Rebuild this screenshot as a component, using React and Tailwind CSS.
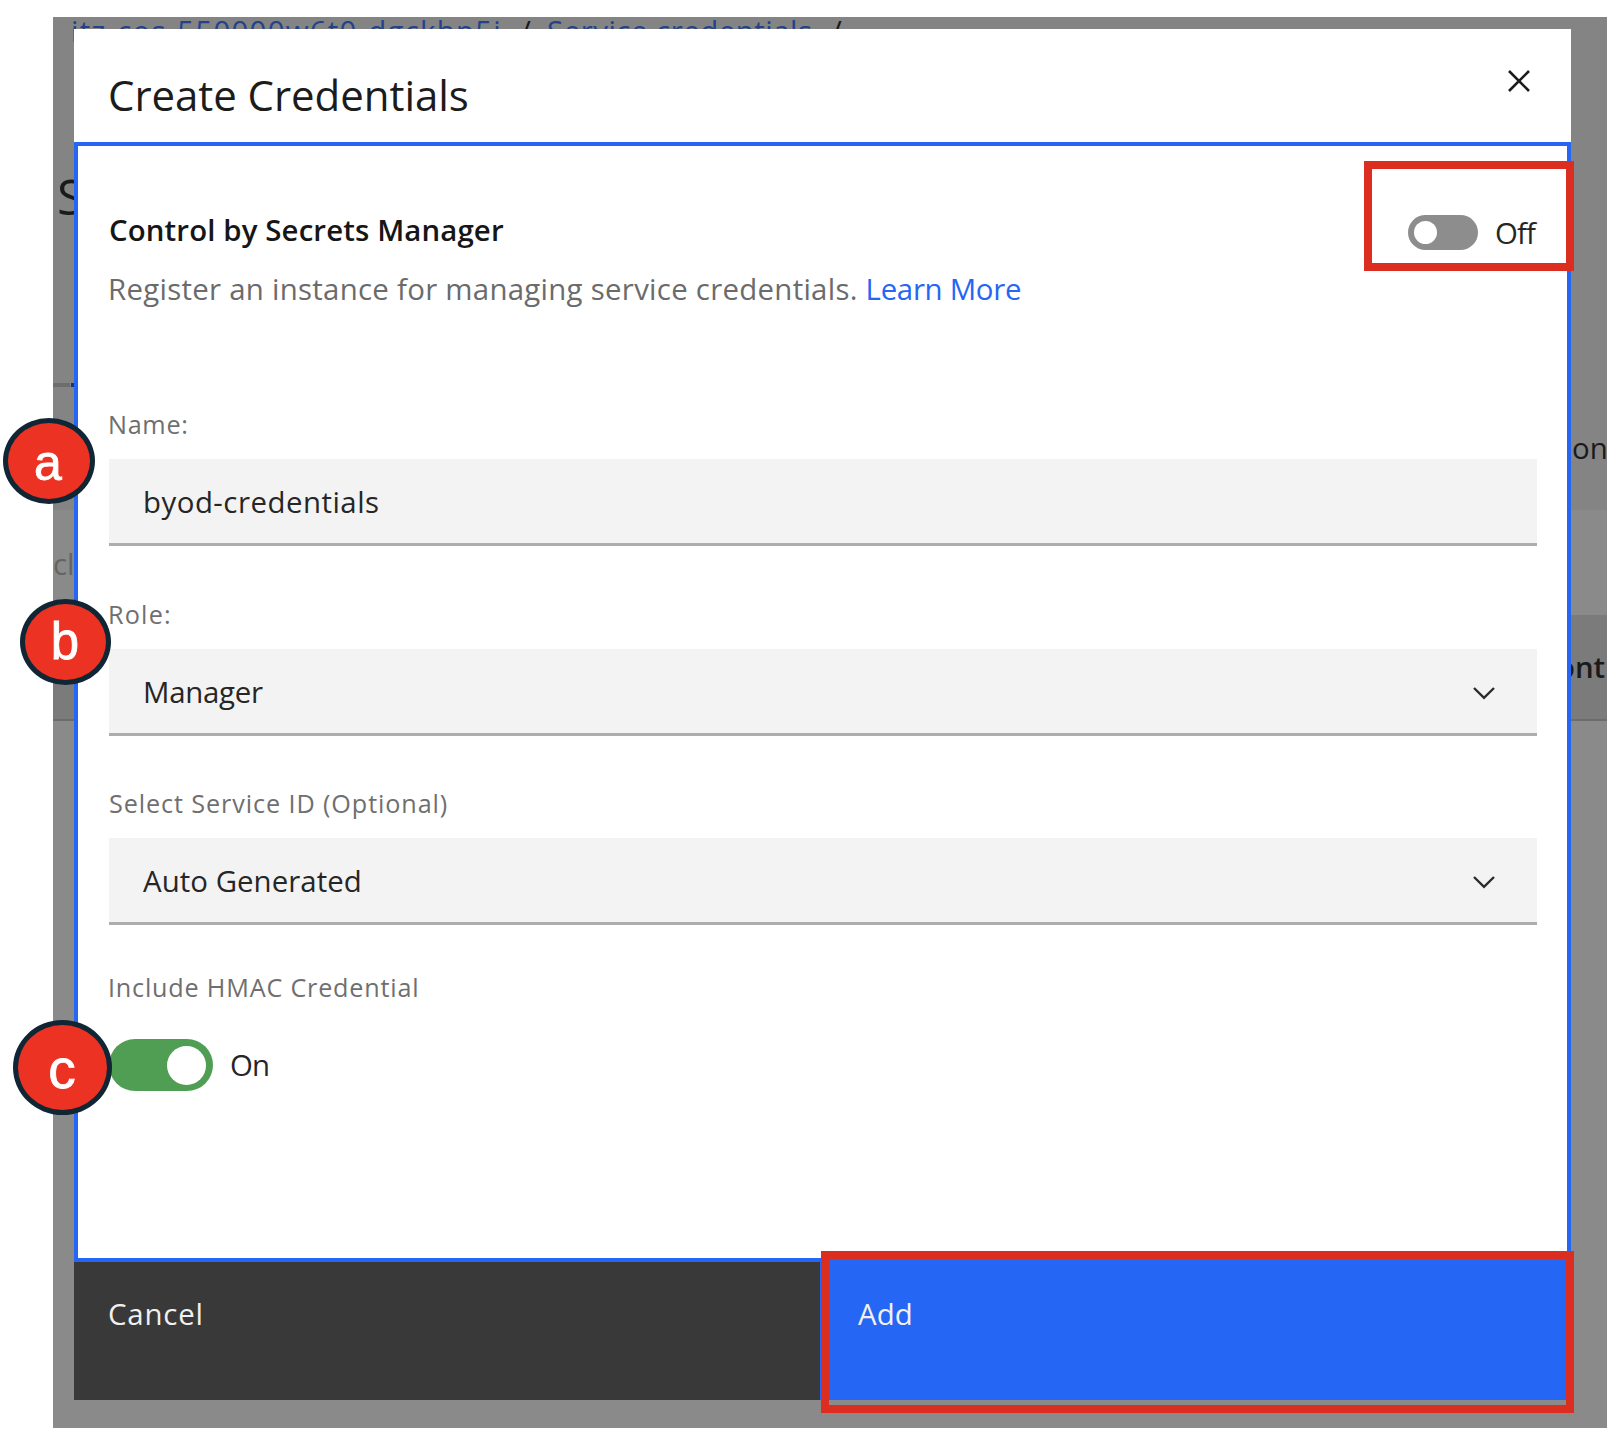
import React from 'react';

function Chevron() {
  return (
    <svg className="mr-[41px] mt-[2px] block h-[14px] w-[24px]" viewBox="0 0 24 14" fill="none" stroke="#2b2b2b" strokeWidth="2.4">
      <path d="M2 2 L12 11.8 L22 2" />
    </svg>
  );
}

function Close() {
  return (
    <svg className="mr-[40px] mt-[40px] block h-[24px] w-[24px]" viewBox="0 0 24 24" fill="none" stroke="#1c1c1c" strokeWidth="2.6">
      <path d="M2 2 L22 22 M22 2 L2 22" />
    </svg>
  );
}

function Field({ children, chevron }) {
  return (
    <div className="mt-[19px] flex h-[87px] items-center justify-between border-b-[3px] border-[#adadad] bg-[#f3f3f3] pl-[34px] pt-[2px] text-[29.4px] leading-[40px] text-[#262626]">
      {children}
      {chevron && <Chevron />}
    </div>
  );
}

function Backdrop() {
  return (
    <div className="flex h-full flex-col overflow-hidden bg-[#8a8a8a] whitespace-nowrap text-[#1a1a1a]">
      <div className="h-[493px] shrink-0 bg-[#848484]">
        <div className="flex h-[40px] pl-[18px] text-[29.4px] leading-[28px]">
          <span className="w-[449px] tracking-[1.25px] text-[#23428c]">itz-cos-550000w6t0-dgckhp5j</span>
          <span className="w-[27px]">/</span>
          <span className="w-[284px] tracking-[0.52px] text-[#23428c]">Service credentials</span>
          <span>/</span>
        </div>
        <div className="mt-[103px] pl-[4px] text-[50px] leading-[72px]">S</div>
        <div className="mt-[151px] flex h-[4px]">
          <div className="w-[17px] bg-[#6d6d6d]" />
          <div className="ml-px w-[200px] bg-[#14357c]" />
        </div>
        <div className="mt-[41px] pl-[1519px] text-[29.4px] leading-[40px]">on</div>
      </div>
      <div className="h-[105px] shrink-0 pt-[34px] text-[29.4px] leading-[40px] text-[#646464]">cl</div>
      <div className="h-[106px] shrink-0 border-b-2 border-[#6c6c6c] bg-[#7b7b7b] pl-[1504px] pt-[32px] text-[29.4px] font-semibold leading-[40px]">
        ont
      </div>
    </div>
  );
}

function Badge({ className, children }) {
  return (
    <div className={'absolute flex items-center justify-center rounded-[50%] border-[5px] border-[#102635] bg-[#ec3323] font-["Liberation_Sans",sans-serif] text-white [-webkit-text-stroke:0.8px_white] ' + className}>
      {children}
    </div>
  );
}

export default function App() {
  return (
    <div className="relative h-[1440px] w-[1620px] overflow-hidden bg-white pl-[53px] pt-[17px] font-['Open_Sans',sans-serif]">
      <div className="relative h-[1411px] w-[1554px]">
        <Backdrop />
        <div className="absolute left-[21px] top-[12px] flex w-[1497px] flex-col bg-white">
          <div className="flex h-[113px] justify-between pl-[34px]">
            <h1 className="mt-[12px] pt-[30px] text-[42px] leading-[48px] tracking-[-0.06px] text-[#1c1c1c]">Create Credentials</h1>
            <Close />
          </div>

          <div className="h-[1120px] border-4 border-[#2566f5] pl-[31px] pr-[30px] pt-[64px]">
            <div className="flex h-[40px] justify-between leading-[40px]">
              <h2 className="text-[29.4px] font-semibold tracking-[0.12px] text-[#161616]">Control by Secrets Manager</h2>
              <div className="mr-[2px] flex">
                <div className="mt-[5px] flex h-[35px] w-[70px] items-center rounded-full bg-[#8d8d8d] pl-[6px]">
                  <div className="size-[23px] rounded-full bg-white" />
                </div>
                <span className="ml-[17px] mt-[3px] text-[29.4px] tracking-[-0.9px] text-[#262626]">Off</span>
              </div>
            </div>
            <p className="-ml-px mt-[19px] whitespace-nowrap text-[29.4px] leading-[40px] text-[#6b6b6b]">
              <span className="tracking-[0.28px]">Register an instance for managing service credentials. </span>
              <span className="tracking-[-0.3px] text-[#2566f5]">Learn More</span>
            </p>

            <div className="-ml-px mt-[99px] text-[25.2px] leading-[32px] tracking-[0.7px] text-[#6f6f6f]">Name:</div>
            <Field><span className="tracking-[0.5px]">byod-credentials</span></Field>

            <div className="-ml-px mt-[52px] text-[25.2px] leading-[32px] tracking-[1.2px] text-[#6f6f6f]">Role:</div>
            <Field chevron><span className="tracking-[-0.25px]">Manager</span></Field>

            <div className="mt-[51px] text-[25.2px] leading-[32px] tracking-[0.9px] text-[#6f6f6f]">Select Service ID (Optional)</div>
            <Field chevron><span className="tracking-[0.05px]">Auto Generated</span></Field>

            <div className="-ml-px mt-[46px] text-[25.2px] leading-[32px] tracking-[0.8px] text-[#6f6f6f]">Include HMAC Credential</div>
            <div className="mt-[36px] flex items-center">
              <div className="flex h-[52px] w-[104px] items-center justify-end rounded-full bg-[#509e54] pr-[7px]">
                <div className="size-[39px] rounded-full bg-white" />
              </div>
              <span className="ml-[17px] text-[29.4px] leading-[40px] tracking-[-0.8px] text-[#262626]">On</span>
            </div>
          </div>

          <div className="flex h-[138px] text-[29.4px] leading-[40px] text-[#f0f0f0]">
            <div className="w-[746px] bg-[#393939] pl-[34px] pt-[32px] tracking-[0.8px]">Cancel</div>
            <div className="flex-1 bg-[#2566f5] pl-[38px] pt-[32px] tracking-[0.1px]">Add</div>
          </div>
        </div>
      </div>

      <div className="absolute left-[1364px] top-[161px] h-[110px] w-[210px] border-8 border-[#db2d20]" />
      <div className="absolute left-[821px] top-[1251px] h-[162px] w-[753px] border-8 border-[#db2d20]" />

      <Badge className="left-[3px] top-[418px] h-[86px] w-[92px] pr-[2px] pt-[4px] text-[50px]">a</Badge>
      <Badge className="left-[20px] top-[599px] h-[86px] w-[91px] pr-[1px] text-[51px]">b</Badge>
      <Badge className="left-[13px] top-[1020px] h-[95px] w-[99px] pr-[1px] pt-[4px] text-[55px]">c</Badge>
    </div>
  );
}
